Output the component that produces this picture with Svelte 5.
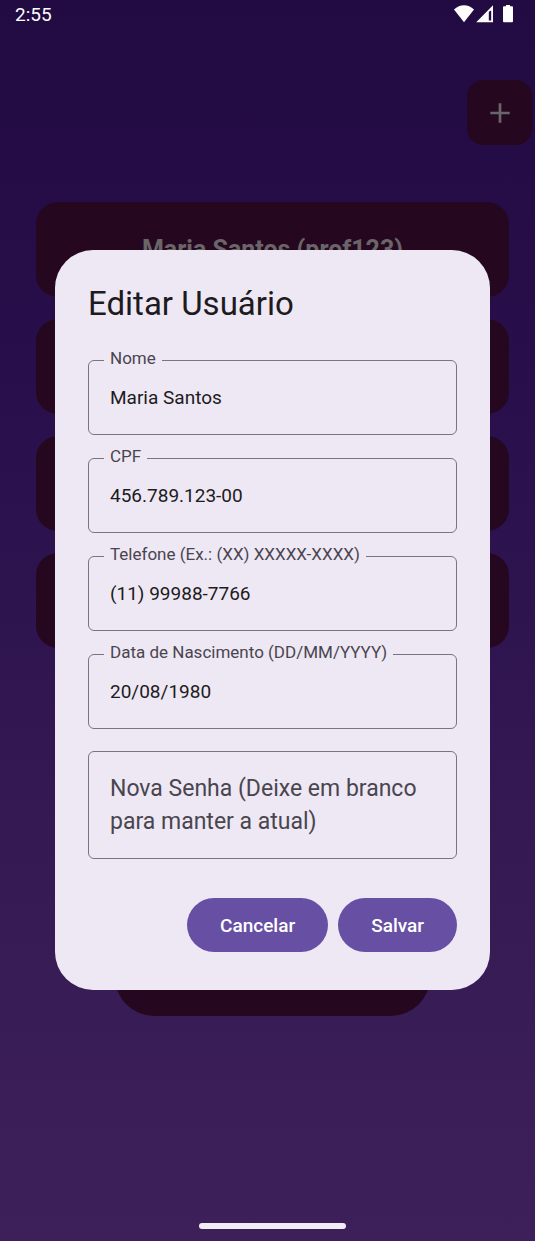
<script>
  const users = ['Maria Santos (prof123)', '', '', ''];

  let fields = $state([
    { id: 'nome', label: 'Nome', value: 'Maria Santos' },
    { id: 'cpf', label: 'CPF', value: '456.789.123-00' },
    { id: 'telefone', label: 'Telefone (Ex.: (XX) XXXXX-XXXX)', value: '(11) 99988-7766' },
    { id: 'nascimento', label: 'Data de Nascimento (DD/MM/YYYY)', value: '20/08/1980' }
  ]);
  let senha = $state('');
</script>

<div class="screen">
  <header class="status">
    <span>2:55</span>
    <svg width="60" height="20" viewBox="0 0 60 20" fill="#fff" aria-hidden="true">
      <path d="M0 5.6C5.8-.2 14.2-.2 20 5.6L10 18.2Z" />
      <path fill-rule="evenodd" d="M39 1.3V18.2H22.2ZM34.8 7.8V16.6H37.2V6.4Z" />
      <path d="M52 1H56V2.3H58.1Q59 2.3 59 3.2V17.3Q59 18.2 58.1 18.2H49.9Q49 18.2 49 17.3V3.2Q49 2.3 49.9 2.3H52Z" />
    </svg>
  </header>

  <div class="toolbar">
    <button class="add" type="button">
      <svg width="20" height="20" viewBox="0 0 20 20" aria-hidden="true">
        <path d="M10 0.3V19.7M0.3 10H19.7" stroke="#6a6568" stroke-width="2.7" />
      </svg>
    </button>
  </div>

  <ul class="users">
    {#each users as user}
      <li>{user}</li>
    {/each}
  </ul>

  <div class="action"></div>
  <div class="home"></div>
</div>

<div class="overlay">
  <form class="dialog" role="dialog" aria-labelledby="titulo" onsubmit={(e) => e.preventDefault()}>
    <h1 id="titulo">Editar Usuário</h1>
    <div class="fields">
      {#each fields as field}
        <fieldset>
          <legend><label for={field.id}>{field.label}</label></legend>
          <input id={field.id} type="text" bind:value={field.value} />
        </fieldset>
      {/each}
      <div class="password">
        {#if !senha}
          <label for="senha">Nova Senha (Deixe em branco para manter a atual)</label>
        {/if}
        <input id="senha" type="password" bind:value={senha} />
      </div>
    </div>
    <div class="buttons">
      <button type="button">Cancelar</button>
      <button type="submit">Salvar</button>
    </div>
  </form>
</div>

<style>
  :global(body) {
    font-family: Roboto, sans-serif;
    background: #3d205a;
  }

  .screen,
  .overlay,
  .screen *,
  .overlay * {
    box-sizing: border-box;
  }

  .screen {
    display: flex;
    flex-direction: column;
    min-height: 100vh;
    padding: 0 0 12px 10px;
    background: linear-gradient(#220a42, #280f4b 30%, #371b55 75%, #3d205a);
  }

  .status {
    display: flex;
    align-items: center;
    justify-content: space-between;
    height: 28px;
    padding: 0 21px 0 5px;
    color: #fff;
    font-size: 19px;
  }

  .toolbar {
    display: flex;
    justify-content: flex-end;
    padding: 52px 3px 57px 0;
  }

  .add {
    display: grid;
    place-items: center;
    width: 65px;
    height: 65px;
    padding: 0;
    border: 0;
    border-radius: 16px;
    background: #250820;
  }

  .users {
    display: flex;
    flex-direction: column;
    gap: 22px;
    margin: 0;
    padding: 0 26px;
    list-style: none;
  }

  .users li {
    display: grid;
    place-items: center;
    height: 95px;
    border-radius: 22px;
    background: #250820;
    color: #6a6568;
    font-size: 25px;
    font-weight: 700;
  }

  .action {
    align-self: center;
    width: 60%;
    height: 78px;
    margin-top: 290px;
    border-radius: 39px;
    background: #250820;
  }

  .home {
    align-self: center;
    width: 28%;
    height: 6px;
    margin-top: auto;
    border-radius: 3px;
    background: #f1edf3;
  }

  .overlay {
    position: fixed;
    inset: 0;
    display: grid;
    align-items: center;
    padding: 0 45px 1px 55px;
  }

  .dialog {
    padding: 32px 33px 38px;
    border-radius: 38px;
    background: #eee8f4;
    color: #1d1b20;
  }

  h1 {
    margin: 0 0 22px;
    font-size: 33px;
    font-weight: 400;
    line-height: 44px;
  }

  .fields {
    display: flex;
    flex-direction: column;
    gap: 11px;
  }

  fieldset {
    min-width: 0;
    margin: 0;
    padding: 0 15px 12px;
    border: 1px solid #79747e;
    border-radius: 6px;
  }

  legend {
    padding: 0 6px 4px;
    color: #49454f;
    font-size: 17px;
    line-height: 20px;
  }

  input {
    display: block;
    width: 100%;
    height: 50px;
    padding: 0 6px;
    border: 0;
    outline: 0;
    background: transparent;
    color: #1d1b20;
    font-family: inherit;
    font-size: 19px;
  }

  .password {
    display: grid;
    margin-top: 11px;
    padding: 20px 15px;
    border: 1px solid #79747e;
    border-radius: 6px;
  }

  .password label,
  .password input {
    grid-area: 1 / 1;
  }

  .password label {
    padding: 0 6px;
    color: #49454f;
    font-size: 23px;
    line-height: 33px;
  }

  .password input {
    height: 66px;
  }

  .buttons {
    display: flex;
    justify-content: flex-end;
    gap: 10px;
    margin-top: 39px;
  }

  .buttons button {
    height: 54px;
    padding: 0 33px;
    border: 0;
    border-radius: 27px;
    background: #6750a4;
    color: #fff;
    font-family: inherit;
    font-size: 19px;
    font-weight: 500;
  }
</style>
